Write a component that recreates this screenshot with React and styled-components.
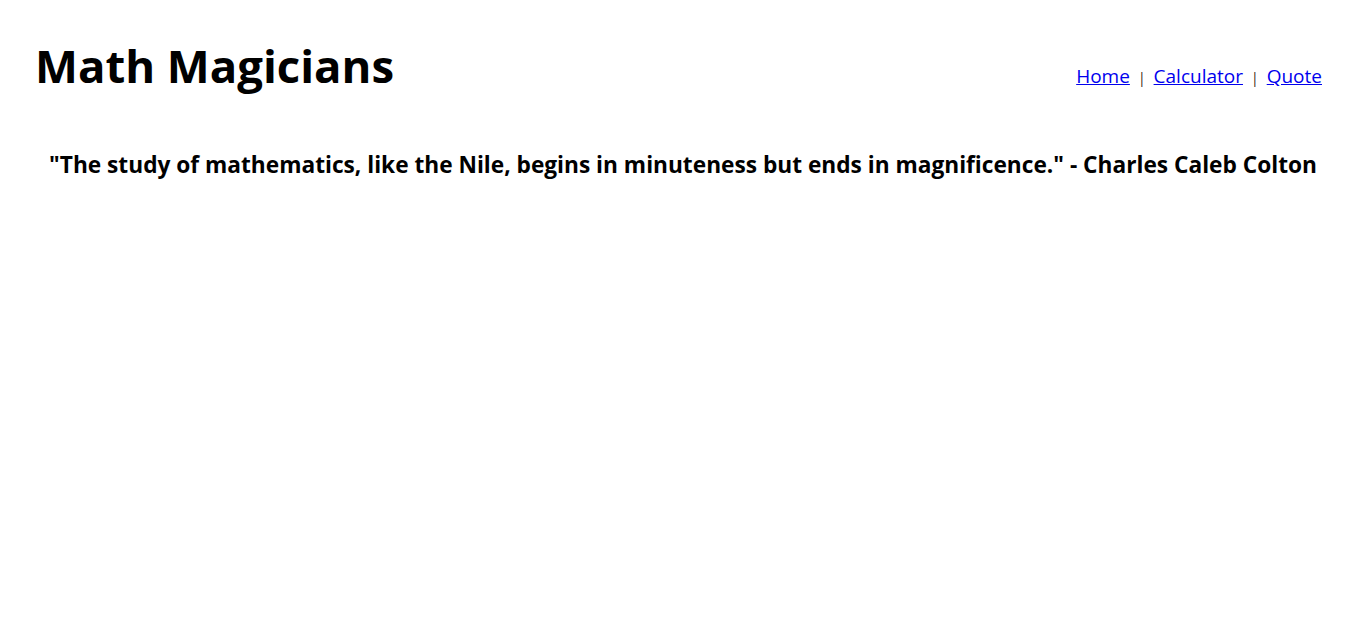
import React from "react";
import styled, { createGlobalStyle } from "styled-components";

const GlobalStyle = createGlobalStyle`
  body {
    margin: 0;
    background: #fff;
    font-family: "Open Sans", "Noto Sans", sans-serif;
  }
`;

function App() {
  return (
    <>
      <GlobalStyle />
      <Header>
        <Title>Math Magicians</Title>
        <Nav>
          <NavLink href="#home">Home</NavLink>
          <Divider>|</Divider>
          <NavLink href="#calculator">Calculator</NavLink>
          <Divider>|</Divider>
          <NavLink href="#quote">Quote</NavLink>
        </Nav>
      </Header>
      <Quote>
        "The study of mathematics, like the Nile, begins in minuteness but ends in
        magnificence." - Charles Caleb Colton
      </Quote>
    </>
  );
}

export default App;

const Header = styled.header`
  display: flex;
  justify-content: space-between;
  align-items: baseline;
  padding: 38px 44px 0 35px;
`;

const Title = styled.h1`
  margin: 0;
  font-size: 45.5px;
  font-weight: 700;
  line-height: 1.2;
  color: #000;
`;

const Nav = styled.nav`
  display: flex;
  align-items: baseline;
  gap: 8px;
  font-size: 19px;
`;

const NavLink = styled.a`
  color: #0000ee;
  text-decoration: underline;
`;

const Divider = styled.span`
  font-size: 14px;
  color: #3a1a10;
`;

const Quote = styled.h3`
  margin: 56px 0 0;
  text-align: center;
  font-size: 22.7px;
  font-weight: 700;
  color: #000;
`;
